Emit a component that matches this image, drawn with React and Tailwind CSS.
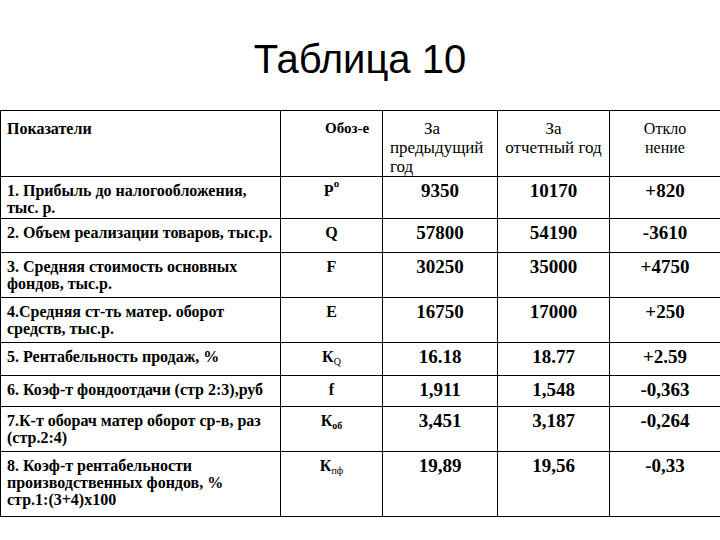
const rows = [
  { h: 'h-[42px]', label: ['1. Прибыль до налогообложения,', 'тыс. р.'], sym: <>Р<sup className="text-[11px] align-[4px]">o</sup></>, a: '9350', b: '10170', c: '+820' },
  { h: 'h-[34px]', label: ['2. Объем реализации товаров, тыс.р.'], sym: 'Q', a: '57800', b: '54190', c: '-3610' },
  { h: 'h-[45px]', label: ['3. Средняя стоимость основных', 'фондов, тыс.р.'], sym: 'F', a: '30250', b: '35000', c: '+4750' },
  { h: 'h-[45px]', label: ['4.Средняя ст-ть матер. оборот', 'средств, тыс.р.'], sym: 'E', a: '16750', b: '17000', c: '+250' },
  { h: 'h-[33px]', label: ['5. Рентабельность продаж, %'], sym: <>К<sub className="text-[10px] font-normal">Q</sub></>, a: '16.18', b: '18.77', c: '+2.59' },
  { h: 'h-[31px]', label: ['6. Коэф-т фондоотдачи (стр 2:3),руб'], sym: 'f', a: '1,911', b: '1,548', c: '-0,363' },
  { h: 'h-[45px]', label: ['7.К-т оборач матер оборот ср-в, раз', '(стр.2:4)'], sym: <>К<sub className="text-[10px]">об</sub></>, a: '3,451', b: '3,187', c: '-0,264' },
  { h: 'h-[65px]', label: ['8. Коэф-т рентабельности', 'производственных фондов, %', 'стр.1:(3+4)х100'], sym: <>К<sub className="text-[10px] font-normal">пф</sub></>, a: '19,89', b: '19,56', c: '-0,33' },
]

export default function App() {
  return (
    <div className="w-[720px] h-[540px] bg-white overflow-hidden text-black">
      <div className="h-[110px] pt-[39px] text-center font-['Liberation_Sans',Arial,sans-serif] text-[40px] leading-none">
        Таблица 10
      </div>

      <div className="border-t border-l border-black font-['Liberation_Serif','Times_New_Roman',serif]">
        <div className="flex h-[66px] border-b border-black leading-[19px]">
          <div className="w-[280px] shrink-0 border-r border-black pl-[6px] pt-[8px] text-[16px] font-bold">Показатели</div>
          <div className="w-[102px] shrink-0 border-r border-black pl-[44px] pt-[8px] text-[15px] font-bold">Обоз-е</div>
          <div className="w-[115px] shrink-0 border-r border-black pl-[7px] pt-[8px] text-[17px]">
            <div className="pl-[34px]">За</div>
            <div>предыдущий</div>
            <div>год</div>
          </div>
          <div className="w-[112px] shrink-0 border-r border-black pt-[8px] text-center text-[17px]">
            <div>За</div>
            <div>отчетный год</div>
          </div>
          <div className="flex-1 pt-[8px] text-center text-[16px]">
            <div>Откло</div>
            <div>нение</div>
          </div>
        </div>

        {rows.map((r, i) => (
          <div key={i} className={`flex ${r.h} border-b border-black font-bold`}>
            <div className="w-[280px] shrink-0 border-r border-black pl-[6px] pt-[5px] text-[16px] leading-[17px]">
              {r.label.map(l => <div key={l}>{l}</div>)}
            </div>
            <div className="w-[102px] shrink-0 border-r border-black pt-[5px] text-center text-[16px] leading-[17px]">{r.sym}</div>
            <div className="w-[115px] shrink-0 border-r border-black pt-[4px] text-center text-[19px] leading-[19px]">{r.a}</div>
            <div className="w-[112px] shrink-0 border-r border-black pt-[4px] text-center text-[19px] leading-[19px]">{r.b}</div>
            <div className="flex-1 pt-[4px] text-center text-[19px] leading-[19px]">{r.c}</div>
          </div>
        ))}
      </div>
    </div>
  )
}
